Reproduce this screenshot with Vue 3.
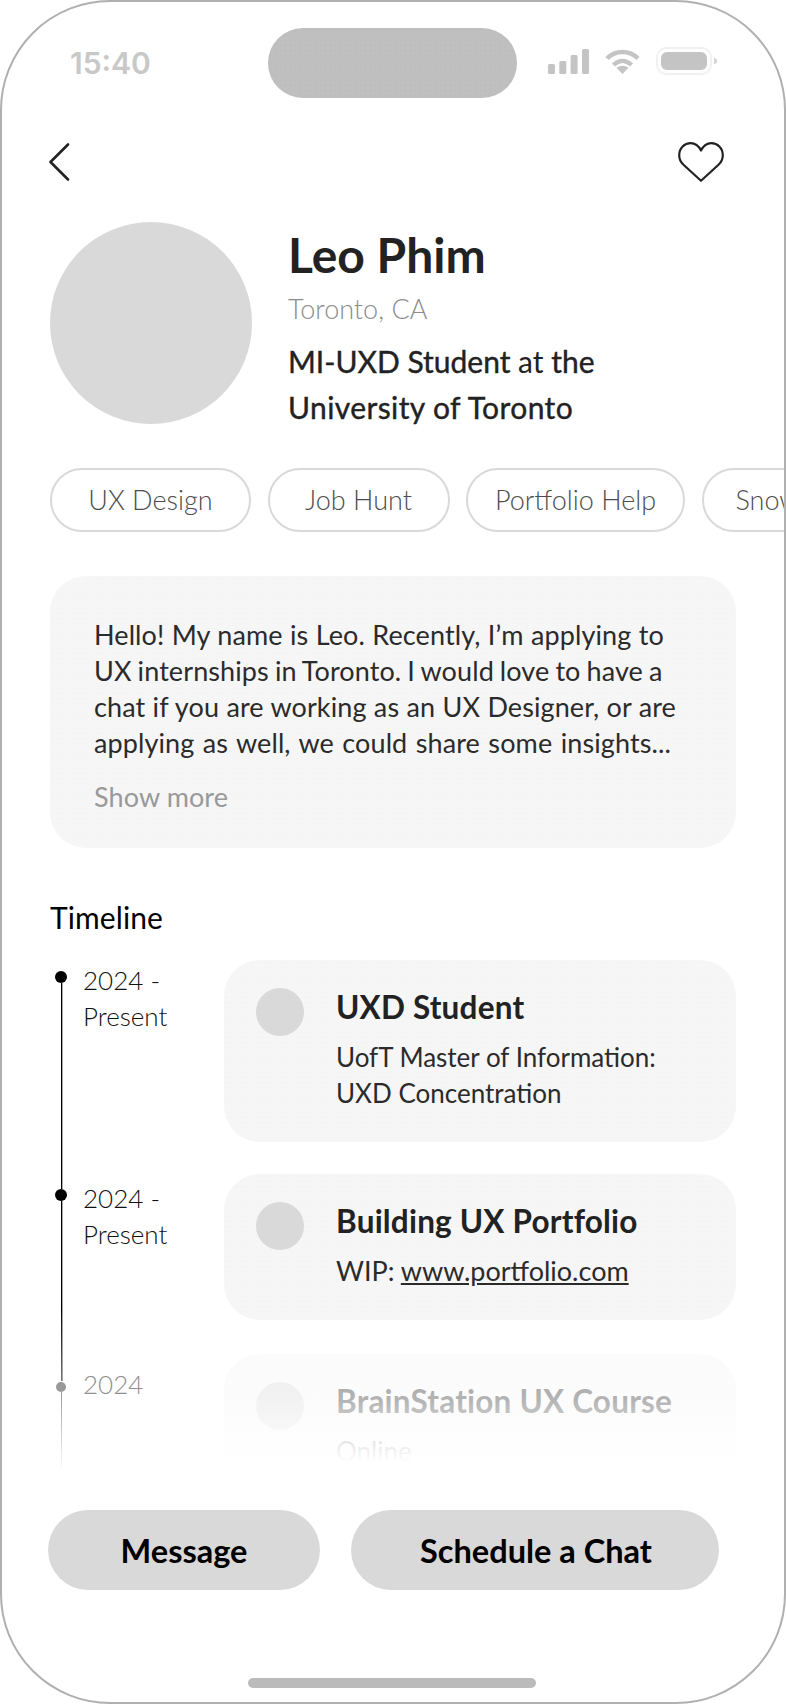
<script setup>
const tags = ['UX Design', 'Job Hunt', 'Portfolio Help', 'Snowboarding']
const aboutLines = [
  'Hello! My name is Leo. Recently, I’m applying to',
  'UX internships in Toronto. I would love to have a',
  'chat if you are working as an UX Designer, or are',
  'applying as well, we could share some insights...',
]
</script>

<template>
  <div class="phone">
    <header class="status">
      <span class="time">15:40</span>
      <div class="island" />
      <div class="status-icons">
        <svg width="41" height="25" viewBox="0 0 41 25" fill="#c4c4c4">
          <rect x="0" y="15" width="7" height="10" rx="1.5" />
          <rect x="11.3" y="12" width="7" height="13" rx="1.5" />
          <rect x="22.6" y="6" width="7" height="19" rx="1.5" />
          <rect x="34" y="0" width="7" height="25" rx="1.5" />
        </svg>
        <svg width="35" height="25" viewBox="0 0 35 25" fill="none" stroke="#c4c4c4" stroke-width="4.5">
          <path d="M2 9.5C10.5 0.8 24.5 0.8 33 9.5" />
          <path d="M8.5 16C14 10.6 21 10.6 26.5 16" />
          <path d="M17.5 25L11.5 18.8C15 16 20 16 23.5 18.8Z" fill="#c4c4c4" stroke="none" />
        </svg>
        <div class="battery"><div class="battery-fill" /></div>
      </div>
    </header>

    <nav class="nav">
      <svg class="back" width="22" height="38" viewBox="0 0 22 38" fill="none" stroke="#222" stroke-width="2.6" stroke-linecap="round" stroke-linejoin="round">
        <path d="M20 1.5L2.5 19L20 36.5" />
      </svg>
      <svg width="46" height="40" viewBox="0 0 46 40" fill="none" stroke="#222" stroke-width="2.2" stroke-linejoin="round">
        <path d="M23 38.8L5.5 22.8C2.8 20.2 1.2 16.8 1.2 13.2C1.2 6.2 6.6 1.2 12.6 1.2C16.8 1.2 20.6 3.8 23 8.6C25.4 3.8 29.2 1.2 33.4 1.2C39.4 1.2 44.8 6.2 44.8 13.2C44.8 16.8 43.2 20.2 40.5 22.8Z" />
      </svg>
    </nav>

    <section class="profile">
      <div class="avatar" />
      <div class="profile-text">
        <h1 class="name">Leo Phim</h1>
        <p class="location">Toronto, CA</p>
        <p class="role">
          <span class="role-line"><b>MI-UXD Student</b> at <b>the</b></span>
          <span class="role-line wide"><b>University of Toronto</b></span>
        </p>
      </div>
    </section>

    <div class="tags">
      <span v-for="tag in tags" :key="tag" class="tag">{{ tag }}</span>
    </div>

    <section class="about">
      <p>
        <span v-for="line in aboutLines" :key="line" class="about-line">{{ line }}</span>
      </p>
      <span class="more">Show more</span>
    </section>

    <h2 class="heading">Timeline</h2>

    <div class="timeline">
      <div class="years">
        <div class="year first">
          <div class="rail"><i class="dot" /><i class="line" /></div>
          <span class="year-text">2024 -<br>Present</span>
        </div>
        <div class="year second">
          <div class="rail"><i class="dot" /><i class="line" /></div>
          <span class="year-text">2024 -<br>Present</span>
        </div>
        <div class="year third">
          <div class="rail"><i class="dot" /><i class="line" /></div>
          <span class="year-text">2024</span>
        </div>
      </div>

      <div class="items">
        <article class="item">
          <div class="item-icon" />
          <div>
            <h3>UXD Student</h3>
            <p>UofT Master of Information:<br>UXD Concentration</p>
          </div>
        </article>
        <article class="item">
          <div class="item-icon" />
          <div>
            <h3>Building UX Portfolio</h3>
            <p>WIP: <u>www.portfolio.com</u></p>
          </div>
        </article>
        <article class="item">
          <div class="item-icon" />
          <div>
            <h3>BrainStation UX Course</h3>
            <p>Online</p>
          </div>
        </article>
        <div class="fade" />
      </div>
    </div>

    <div class="actions">
      <button class="btn message">Message</button>
      <button class="btn schedule">Schedule a Chat</button>
    </div>

    <div class="home-bar" />
  </div>
</template>

<style>
html, body {
  margin: 0;
  background: #fff;
}
</style>

<style scoped>
.phone {
  box-sizing: border-box;
  width: 786px;
  height: 1704px;
  border: 2px solid #b0b0b0;
  border-radius: 110px;
  overflow: hidden;
  background: #fff;
  font-family: Lato, "Liberation Sans", sans-serif;
  color: #222;
}
h1, h2, h3, p {
  margin: 0;
  font-weight: inherit;
}

.status {
  display: flex;
  align-items: center;
  height: 70px;
  margin-top: 26px;
  padding-left: 68px;
}
.time {
  width: 198px;
  font-family: Inter, "Liberation Sans", sans-serif;
  font-size: 30px;
  font-weight: 600;
  color: #c8c8c8;
}
.island {
  width: 249px;
  height: 70px;
  border-radius: 35px;
  background-color: #bfbfbf;
  background-image: radial-gradient(rgba(0, 0, 0, 0.03) 0.7px, transparent 0.8px);
  background-size: 5px 5px;
}
.status-icons {
  display: flex;
  align-items: center;
  gap: 16px;
  margin: 0 0 4px 31px;
}
.battery {
  position: relative;
  box-sizing: border-box;
  width: 56px;
  height: 28px;
  padding: 3px;
  border: 2px solid #f1f1f1;
  border-radius: 10px;
}
.battery::after {
  content: '';
  position: absolute;
  top: 9px;
  right: -7px;
  width: 3px;
  height: 6px;
  border-radius: 0 3px 3px 0;
  background: #d5d5d5;
}
.battery-fill {
  height: 100%;
  border-radius: 6px;
  background: #c4c4c4;
}

.nav {
  display: flex;
  justify-content: space-between;
  height: 40px;
  margin-top: 44px;
  padding: 0 60px 0 46px;
}
.back {
  margin-top: 1px;
}

.profile {
  display: flex;
  gap: 36px;
  margin-top: 40px;
  padding-left: 48px;
}
.avatar {
  flex: none;
  width: 202px;
  height: 202px;
  border-radius: 50%;
  background: #d9d9d9;
}
.name {
  font-size: 48px;
  font-weight: 700;
  line-height: 66px;
  color: #222;
}
.location {
  font-size: 27px;
  font-weight: 300;
  line-height: 42px;
  color: #8c8c8c;
}
.role {
  margin-top: 8px;
  font-size: 30px;
  line-height: 46px;
  color: #222;
}
.role-line {
  display: block;
}
.role-line.wide {
  letter-spacing: 0.4px;
}
.role b {
  font-weight: 400;
  -webkit-text-stroke: 0.4px #222;
}

.tags {
  display: flex;
  gap: 16.5px;
  margin-top: 38px;
  padding-left: 48px;
}
.tag {
  box-sizing: border-box;
  flex: none;
  display: flex;
  align-items: center;
  justify-content: center;
  height: 64px;
  padding: 0 0 2px;
  border: 2px solid #d9d9d9;
  border-radius: 32px;
  font-size: 27px;
  font-weight: 300;
  white-space: nowrap;
  color: #4d4d4d;
}
.tag:nth-child(1) { width: 201px; }
.tag:nth-child(2) { width: 182px; }
.tag:nth-child(3) { width: 219px; }
.tag:nth-child(4) { padding: 0 32px 2px; }

.about {
  box-sizing: border-box;
  width: 686px;
  height: 272px;
  margin: 44px 0 0 48px;
  padding: 41px 44px 0;
  border-radius: 36px;
  background-color: #f6f6f6;
  background-image: radial-gradient(rgba(0, 0, 0, 0.018) 0.7px, transparent 0.8px);
  background-size: 5px 5px;
  font-size: 27px;
  letter-spacing: 0.1px;
  line-height: 36px;
  white-space: nowrap;
  color: #2b2b2b;
}
.about-line {
  display: block;
}
.about-line:nth-child(1) { word-spacing: 0.35px; }
.about-line:nth-child(2) { word-spacing: -1px; }
.about-line:nth-child(3) { word-spacing: 0.3px; }
.about-line:nth-child(4) { word-spacing: 1.4px; }
.more {
  display: block;
  margin-top: 18px;
  color: #999;
}

.heading {
  margin: 49px 0 0 48px;
  font-size: 30px;
  font-weight: 400;
  line-height: 40px;
  letter-spacing: 0.1px;
  color: #000;
}

.timeline {
  display: flex;
  height: 510px;
  margin: 23px 0 0 48px;
  overflow: hidden;
}
.years {
  flex: none;
  box-sizing: border-box;
  width: 174px;
  padding-top: 11px;
  font-size: 26px;
  font-weight: 300;
  line-height: 36px;
  color: #111;
}
.year {
  display: flex;
  gap: 16px;
  padding-left: 5px;
}
.year.first { height: 218px; }
.year.second { height: 192px; }
.year.third { height: 90px; color: #8f8f8f; }
.rail {
  display: flex;
  flex-direction: column;
  align-items: center;
  width: 12px;
}
.dot {
  flex: none;
  width: 12px;
  height: 12px;
  border-radius: 50%;
  background: #000;
}
.line {
  flex: 1;
  width: 1px;
  background: #000;
  box-shadow: 1px 0 0 rgba(0, 0, 0, 0.35);
}
.second .line {
  background: linear-gradient(#000 60%, #777);
}
.third .dot {
  width: 10px;
  height: 10px;
  margin-top: 1px;
  background: #999;
}
.third .line {
  background: linear-gradient(#999, rgba(153, 153, 153, 0));
  box-shadow: none;
}
.year-text {
  margin-top: -9px;
}
.third .year-text {
  margin-top: -15px;
}

.items {
  position: relative;
  display: flex;
  flex-direction: column;
  gap: 32px;
  width: 512px;
}
.item {
  flex: none;
  display: flex;
  gap: 32px;
  box-sizing: border-box;
  padding: 28px 32px 31px;
  border-radius: 36px;
  background-color: #f6f6f6;
  background-image: radial-gradient(rgba(0, 0, 0, 0.018) 0.7px, transparent 0.8px);
  background-size: 5px 5px;
}
.item:nth-child(3) {
  margin-top: 2px;
}
.item-icon {
  flex: none;
  width: 48px;
  height: 48px;
  border-radius: 50%;
  background: #d9d9d9;
}
.item h3 {
  margin-top: -1px;
  font-size: 31.5px;
  font-weight: 700;
  letter-spacing: 0.2px;
  line-height: 40px;
  white-space: nowrap;
  color: #222;
}
.item p {
  margin-top: 12px;
  font-size: 26px;
  line-height: 36px;
  white-space: nowrap;
  color: #2b2b2b;
}
.item:nth-child(2) p {
  font-size: 27px;
}
.fade {
  position: absolute;
  left: 0;
  right: 0;
  bottom: 0;
  height: 140px;
  background: linear-gradient(rgba(255, 255, 255, 0), rgba(255, 255, 255, 0.58) 18%, rgba(255, 255, 255, 0.66) 50%, #fff 95%);
}

.actions {
  display: flex;
  gap: 31px;
  margin: 40px 0 0 46px;
}
.btn {
  height: 80px;
  padding: 0;
  border: 0;
  border-radius: 40px;
  background: #d9d9d9;
  font-family: inherit;
  font-size: 32.5px;
  font-weight: 700;
  color: #000;
}
.btn.message { width: 272px; }
.btn.schedule {
  width: 368px;
  padding-left: 2px;
}

.home-bar {
  width: 288px;
  height: 10px;
  margin: 88px 0 0 246px;
  border-radius: 5px;
  background: #bbb;
}
</style>
